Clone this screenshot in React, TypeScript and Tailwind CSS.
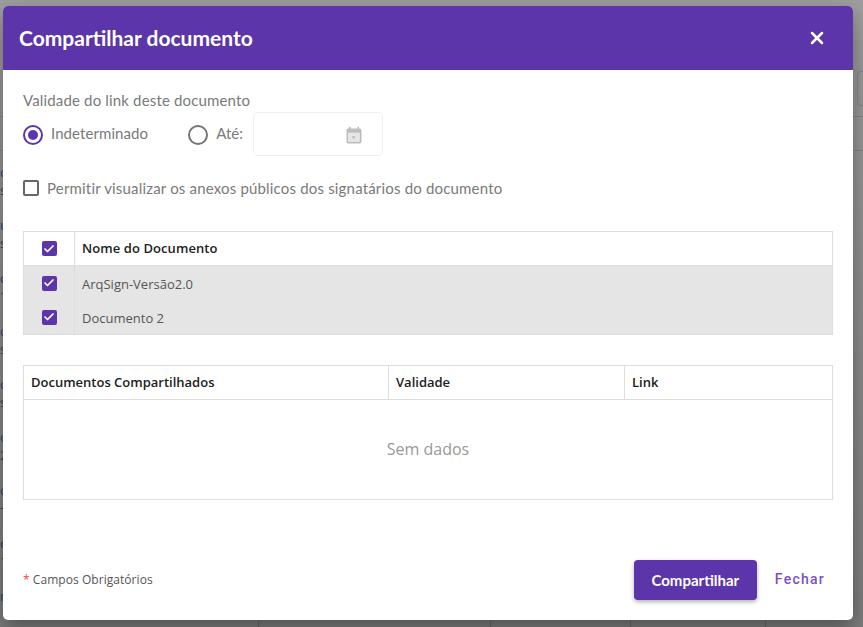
import React from 'react';
import { Check, X } from 'lucide-react';

const purple = 'bg-[#5c35ab]';

const edgeRows = [
  ['c', 's'],
  ['u', 's'],
  ['c', '1'],
  ['c', 's'],
  ['c', 's'],
  ['o', '2'],
  ['c', '+'],
  ['c', '1'],
  ['n', ''],
];

function Tick() {
  return (
    <span className={`flex h-[15px] w-[15px] items-center justify-center rounded-[2px] ${purple}`}>
      <Check className="h-3 w-3 text-white" strokeWidth={3.5} />
    </span>
  );
}

function CalendarIcon() {
  return (
    <svg viewBox="0 0 24 24" className="h-5 w-5">
      <path d="M5 8h14v11H5z" fill="#e6e6e6" />
      <path
        fill="#bdbdbd"
        d="M13 12h-3v3h3v-3zM16 1v2H8V1H6v2H5c-1.11 0-1.99.9-1.99 2L3 19c0 1.1.89 2 2 2h14c1.1 0 2-.9 2-2V5c0-1.1-.9-2-2-2h-1V1h-2zm3 18H5V8h14v11z"
      />
    </svg>
  );
}

function App() {
  return (
    <div className="relative h-[627px] w-[863px] overflow-hidden bg-gradient-to-b from-[#9c9c9c] to-[#7c7c7c] font-['Lato',sans-serif]">
      {/* Page behind the overlay */}
      <div className="flex h-full flex-col">
        <div className="h-[40px] shrink-0 bg-[#9e9e9e]" />
        <div className="flex h-[77px] shrink-0 justify-end border-b border-[#858585] pt-[31px]">
          <div className="h-[35px] w-[6px] rounded-l-[4px] border border-r-0 border-[#858585]" />
        </div>
        <div className="h-[34px] shrink-0 border-b border-[#858585]" />
        <div className="flex shrink-0 flex-col pt-[12px] font-['Open_Sans',sans-serif] text-[13px] leading-[18px]">
          {edgeRows.map((row, i) => (
            <div key={i} className="flex h-[53px] shrink-0 flex-col">
              <span className="text-[#1d4a70]">{row[0]}</span>
              <span className="text-[#33404a]">{row[1]}</span>
            </div>
          ))}
        </div>
      </div>
      <div className="absolute bottom-0 left-0 flex h-[7px] w-full">
        <div className="w-[259px] border-r border-[#666]" />
        <div className="w-[232px] border-r border-[#666]" />
        <div className="w-[140px] border-r border-[#666]" />
        <div className="w-[135px] border-r border-[#666]" />
      </div>

      {/* Modal */}
      <div className="absolute left-[3px] top-[6px] flex h-[614px] w-[850px] flex-col overflow-hidden rounded-[5px] bg-white shadow-[0_8px_20px_rgba(0,0,0,0.35)]">
        <header className={`flex h-[64px] shrink-0 items-center justify-between pl-4 pr-[26px] ${purple}`}>
          <h1 className="text-[21px] font-bold text-white">Compartilhar documento</h1>
          <X className="h-[20px] w-[20px] text-white" strokeWidth={3} />
        </header>

        <div className="flex flex-1 flex-col px-5">
          <p className="mt-[19px] text-[15px] leading-[22px] tracking-[0.16px] text-[#7a7a7a]">Validade do link deste documento</p>

          <div className="mt-[1px] flex h-[44px] items-center text-[15px] tracking-[0.08px] text-[#7a7a7a]">
            <span className="mt-[2px] flex h-5 w-5 items-center justify-center rounded-full border-2 border-[#5c35ab]">
              <span className={`h-[10px] w-[10px] rounded-full ${purple}`} />
            </span>
            <span className="mb-[1px] ml-2">Indeterminado</span>
            <span className="ml-10 mt-[2px] h-5 w-5 rounded-full border-2 border-[#757575]" />
            <span className="mb-[1px] ml-2">Até:</span>
            <div className="ml-[10px] flex h-[44px] w-[130px] items-center justify-end rounded-[5px] border border-[#eeeeee] pr-[18px] pt-[4px]">
              <CalendarIcon />
            </div>
          </div>

          <label className="mt-[21px] flex h-[22px] items-center text-[15px] tracking-[0.18px] text-[#7a7a7a]">
            <span className="h-4 w-4 rounded-[2px] border-2 border-[#666666]" />
            <span className="ml-2">Permitir visualizar os anexos públicos dos signatários do documento</span>
          </label>

          {/* Seleção */}
          <div className="mt-[32px] border border-[#dddddd] font-['Open_Sans',sans-serif] text-[13px]">
            <div className="flex h-[34px] border-b border-[#dddddd] font-[550] tracking-[0.08px] text-[#212121]">
              <div className="flex w-[51px] items-center justify-center border-r border-[#dddddd]">
                <Tick />
              </div>
              <div className="flex items-center pl-[7px]">Nome do Documento</div>
            </div>
            {['ArqSign-Versão2.0', 'Documento 2'].map((name) => (
              <div key={name} className="flex h-[34px] bg-[#e5e5e5] text-[#555555]">
                <div className="flex w-[51px] items-center justify-center border-r border-[#dddddd]">
                  <Tick />
                </div>
                <div className="flex items-center pl-[7px] pt-[3px]">{name}</div>
              </div>
            ))}
          </div>

          {/* Compartilhados */}
          <div className="mt-[30px] h-[135px] border border-[#dddddd] font-['Open_Sans',sans-serif] text-[13px]">
            <div className="flex h-[34px] border-b border-[#dddddd] font-[550] text-[#212121]">
              <div className="flex w-[365px] items-center border-r border-[#dddddd] pl-[7px]">Documentos Compartilhados</div>
              <div className="flex w-[236px] items-center border-r border-[#dddddd] pl-[7px]">Validade</div>
              <div className="flex items-center pl-[7px]">Link</div>
            </div>
            <div className="flex h-[99px] items-center justify-center pb-[2px] text-[16px] text-[#999999]">Sem dados</div>
          </div>

          <footer className="mt-[60px] flex items-center justify-between">
            <span className="font-['Open_Sans',sans-serif] text-[12px] tracking-[0.05px] text-[#555555]">
              <span className="text-[#f44336]">*</span> Campos Obrigatórios
            </span>
            <div className="flex items-center">
              <button className={`h-[40px] w-[123px] rounded-[4px] text-[15px] font-bold text-white shadow-[0_2px_4px_rgba(0,0,0,0.3)] ${purple}`}>
                Compartilhar
              </button>
              <button className="mb-[2px] ml-[18px] mr-2 font-['Roboto',sans-serif] text-[14px] font-medium tracking-[1.25px] text-[#7a50c8]">
                Fechar
              </button>
            </div>
          </footer>
        </div>
      </div>
    </div>
  );
}

export default App;
